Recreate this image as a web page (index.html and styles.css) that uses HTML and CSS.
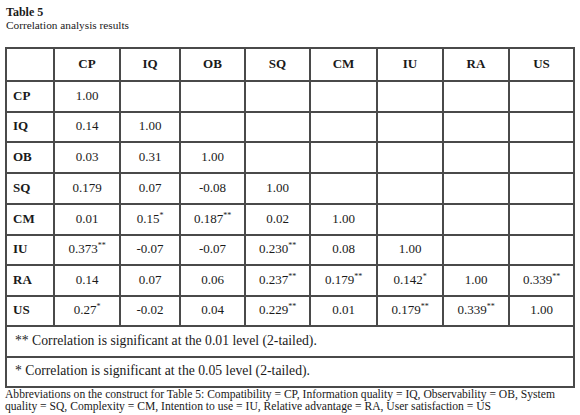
FILE: index.html
```html
<!DOCTYPE html>
<html lang="en">
<head>
    <meta charset="UTF-8">
    <meta name="viewport" content="width=device-width, initial-scale=1.0">
    <title>Table 5 - Correlation analysis results</title>
    <link rel="stylesheet" href="styles.css">
</head>
<body>
    <div class="caption">
        <div class="caption-title">Table 5</div>
        <div class="caption-text">Correlation analysis results</div>
    </div>

    <table class="corr">
        <colgroup>
            <col class="c-label">
            <col class="c-cp">
            <col class="c-iq">
            <col class="c-ob">
            <col class="c-sq">
            <col class="c-cm">
            <col class="c-iu">
            <col class="c-ra">
            <col class="c-us">
        </colgroup>
        <thead>
            <tr class="head-row">
                <th></th>
                <th>CP</th>
                <th>IQ</th>
                <th>OB</th>
                <th>SQ</th>
                <th>CM</th>
                <th>IU</th>
                <th>RA</th>
                <th>US</th>
            </tr>
        </thead>
        <tbody>
            <!-- CP -->
            <tr>
                <th class="row-label">CP</th>
                <td>1.00</td><td></td><td></td><td></td><td></td><td></td><td></td><td></td>
            </tr>
            <!-- IQ -->
            <tr>
                <th class="row-label">IQ</th>
                <td>0.14</td><td>1.00</td><td></td><td></td><td></td><td></td><td></td><td></td>
            </tr>
            <!-- OB -->
            <tr>
                <th class="row-label">OB</th>
                <td>0.03</td><td>0.31</td><td>1.00</td><td></td><td></td><td></td><td></td><td></td>
            </tr>
            <!-- SQ -->
            <tr class="tall">
                <th class="row-label">SQ</th>
                <td>0.179</td><td>0.07</td><td>-0.08</td><td>1.00</td><td></td><td></td><td></td><td></td>
            </tr>
            <!-- CM -->
            <tr>
                <th class="row-label">CM</th>
                <td>0.01</td>
                <td>0.15<sup>*</sup></td>
                <td>0.187<sup>**</sup></td>
                <td>0.02</td>
                <td>1.00</td><td></td><td></td><td></td>
            </tr>
            <!-- IU -->
            <tr>
                <th class="row-label">IU</th>
                <td>0.373<sup>**</sup></td>
                <td>-0.07</td>
                <td>-0.07</td>
                <td>0.230<sup>**</sup></td>
                <td>0.08</td>
                <td>1.00</td><td></td><td></td>
            </tr>
            <!-- RA -->
            <tr>
                <th class="row-label">RA</th>
                <td>0.14</td>
                <td>0.07</td>
                <td>0.06</td>
                <td>0.237<sup>**</sup></td>
                <td>0.179<sup>**</sup></td>
                <td>0.142<sup>*</sup></td>
                <td>1.00</td>
                <td>0.339<sup>**</sup></td>
            </tr>
            <!-- US -->
            <tr>
                <th class="row-label">US</th>
                <td>0.27<sup>*</sup></td>
                <td>-0.02</td>
                <td>0.04</td>
                <td>0.229<sup>**</sup></td>
                <td>0.01</td>
                <td>0.179<sup>**</sup></td>
                <td>0.339<sup>**</sup></td>
                <td>1.00</td>
            </tr>
            <tr>
                <td class="note" colspan="9">** Correlation is significant at the 0.01 level (2-tailed).</td>
            </tr>
            <tr>
                <td class="note" colspan="9">* Correlation is significant at the 0.05 level (2-tailed).</td>
            </tr>
        </tbody>
    </table>

    <p class="abbrev">Abbreviations on the construct for Table 5: Compatibility = CP, Information quality = IQ, Observability = OB, System quality = SQ, Complexity = CM, Intention to use = IU, Relative advantage = RA, User satisfaction = US</p>
</body>
</html>
```

FILE: styles.css
```css
body {
    margin: 0;
    padding: 6px 5px 0 5px;
    background-color: #fff;
    color: #1a1a1a;
    font-family: "Liberation Serif", "Times New Roman", serif;
}
.caption {
    padding-left: 1px;
}
.caption-title {
    font-weight: bold;
    font-size: 12px;
    line-height: 13px;
}
.caption-text {
    font-size: 11.3px;
    line-height: 13px;
}
.corr {
    margin-top: 15px;
    width: 568px;
    table-layout: fixed;
    border-collapse: collapse;
    font-size: 13px;
}
.corr th,
.corr td {
    border: 2px solid #4a4a4a;
    height: 27.5px;
    padding: 0 0 1px 0;
    text-align: center;
    vertical-align: middle;
}
.corr .head-row th {
    height: 29px;
    padding-bottom: 2px;
}
.corr .tall th,
.corr .tall td {
    height: 28.5px;
}
.c-label { width: 48px; }
.c-cp { width: 66px; }
.c-iq { width: 60px; }
.c-ob { width: 65px; }
.c-sq { width: 65px; }
.c-cm { width: 67px; }
.c-iu { width: 66px; }
.c-ra { width: 66px; }
.c-us { width: 65px; }
.row-label {
    text-align: left !important;
    padding-left: 6px !important;
}
.corr sup {
    font-size: 8px;
    line-height: 0;
    vertical-align: 5px;
}
.corr .note {
    text-align: left;
    font-size: 13.7px;
    padding-left: 8px;
}
.abbrev {
    margin: 1px 0 0 0;
    width: 560px;
    font-size: 11.6px;
    line-height: 12px;
}
```
